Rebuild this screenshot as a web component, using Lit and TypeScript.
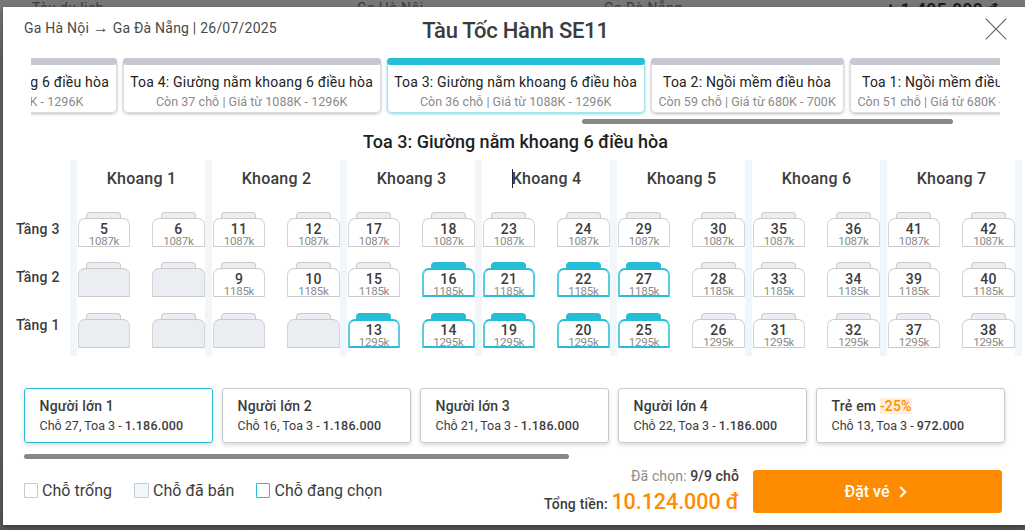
import {LitElement, html, css, nothing} from 'lit';
import {customElement, property} from 'lit/decorators.js';
import {classMap} from 'lit/directives/class-map.js';

type SeatState = 'free' | 'sold' | 'picked';

interface Seat {
  no: number;
  price: string;
  state: SeatState;
}

const COACHES = [
  {name: 'Toa 5: Giường nằm khoang 6 điều hòa', info: 'Còn 36 chỗ | Giá từ 1088K - 1296K', seat: false},
  {name: 'Toa 4: Giường nằm khoang 6 điều hòa', info: 'Còn 37 chỗ | Giá từ 1088K - 1296K', seat: false},
  {name: 'Toa 3: Giường nằm khoang 6 điều hòa', info: 'Còn 36 chỗ | Giá từ 1088K - 1296K', seat: false, active: true},
  {name: 'Toa 2: Ngồi mềm điều hòa', info: 'Còn 59 chỗ | Giá từ 680K - 700K', seat: true},
  {name: 'Toa 1: Ngồi mềm điều hòa', info: 'Còn 51 chỗ | Giá từ 680K - 700K', seat: true},
];

const PRICES = ['1087k', '1185k', '1295k'];
const SOLD = [1, 2, 3, 4, 7, 8];
const PICKED = [13, 14, 16, 19, 20, 21, 22, 25, 27];

const PASSENGERS = [
  {name: 'Người lớn 1', place: 'Chỗ 27, Toa 3 - ', price: '1.186.000', active: true},
  {name: 'Người lớn 2', place: 'Chỗ 16, Toa 3 - ', price: '1.186.000'},
  {name: 'Người lớn 3', place: 'Chỗ 21, Toa 3 - ', price: '1.186.000'},
  {name: 'Người lớn 4', place: 'Chỗ 22, Toa 3 - ', price: '1.186.000'},
  {name: 'Trẻ em', discount: '-25%', place: 'Chỗ 13, Toa 3 - ', price: '972.000'},
];

// six berths per compartment, numbered from the bottom level up
function berths(compartment: number): Seat[][] {
  return PRICES.map((price, row) => {
    const first = compartment * 6 + (2 - row) * 2 + 1;
    return [first, first + 1].map(no => ({
      no,
      price,
      state: SOLD.includes(no) ? 'sold' : PICKED.includes(no) ? 'picked' : 'free',
    } as Seat));
  });
}

@customElement('train-seat')
export class TrainSeat extends LitElement {

  static styles = css`
    :host {
      display: block;
      width: 52.4px;
      height: 35px;
    }

    .head {
      box-sizing: border-box;
      width: 35px;
      height: 6px;
      margin: 0 auto;
      border: 1px solid #c9cacc;
      border-bottom: 0;
      border-radius: 4px 4px 0 0;
      background: #eaedf2;
    }

    .body {
      box-sizing: border-box;
      height: 29px;
      padding-top: 3px;
      border: 1px solid #cbcbcb;
      border-left-color: #d4d4d4;
      border-right-color: #d4d4d4;
      border-radius: 7px 7px 1px 1px;
      background: #fff;
      text-align: center;
    }

    .sold {
      background: #eaedf2;
    }

    .picked.head {
      border-color: #26bed6;
      background: #26bed6;
    }

    .picked.body {
      border: 2px solid #26bed6;
      border-left-color: #58cde0;
      border-right-color: #58cde0;
      padding-top: 2px;
    }

    .no {
      font-size: 14px;
      font-weight: 500;
      line-height: 14px;
      letter-spacing: 0.2px;
      color: #3c3c3c;
    }

    .price {
      font-size: 11.5px;
      line-height: 11px;
      letter-spacing: -0.25px;
      color: #8b8b8b;
    }
  `

  @property({attribute: false}) seat!: Seat;

  render() {
    const {no, price, state} = this.seat;
    return html`
      <div class=${classMap({head: true, picked: state === 'picked'})}></div>
      <div class=${classMap({body: true, [state]: true})}>
        ${state === 'sold' ? nothing : html`
          <div class="no">${no}</div>
          <div class="price">${price}</div>
        `}
      </div>
    `
  }
}

@customElement('app-root')
export class AppRoot extends LitElement {

  static styles = css`
    :host {
      display: block;
      box-sizing: border-box;
      width: 1025px;
      height: 530px;
      overflow: hidden;
      font-family: Roboto, "Liberation Sans", sans-serif;
      color: #3c3c3c;
      background: linear-gradient(#777 0, #777 7px, #5f6264 60px, #5f6264 440px, #55565a 530px);
    }

    .behind {
      box-sizing: border-box;
      display: grid;
      grid-template-columns: 325px 247px 282px 1fr;
      height: 7px;
      padding-left: 32px;
      overflow: hidden;
      font-size: 14px;
      line-height: 16px;
      letter-spacing: 0.4px;
      color: #3b3b3b;
    }

    .behind b {
      font-size: 17px;
      line-height: 18px;
      letter-spacing: 0.5px;
      color: #1c1c1c;
    }

    .modal {
      height: 518px;
      margin-left: 3px;
      background: #fff;
      box-shadow: 0 2px 5px rgba(0, 0, 0, 0.35);
      overflow: hidden;
    }

    .header {
      box-sizing: border-box;
      display: grid;
      grid-template-columns: 1fr auto 1fr;
      height: 51px;
      padding: 9px 18px 0 21px;
    }

    .route {
      font-size: 14px;
      line-height: 25px;
      letter-spacing: 0.22px;
      color: #4a4a4a;
    }

    .arrow {
      font-size: 16px;
      line-height: 14px;
    }

    .train {
      font-size: 22px;
      font-weight: 500;
      line-height: 29px;
      letter-spacing: -0.25px;
    }

    .close {
      justify-self: end;
      margin-top: 2px;
    }

    .coaches {
      display: flex;
      gap: 6px;
      height: 61px;
      margin: 0 25px 0 28px;
      overflow: hidden;
    }

    .coach {
      box-sizing: border-box;
      flex: none;
      width: 258px;
      height: 55px;
      border: 1px solid #dcdce0;
      border-top: 0;
      border-radius: 5px;
      box-shadow: 0 1px 3px rgba(0, 0, 0, 0.28);
      text-align: center;
      white-space: nowrap;
    }

    .coach:first-child {
      margin-left: -172.4px;
    }

    .coach.seating {
      width: 193px;
    }

    .bar {
      height: 7px;
      margin: 0 -1px;
      border-radius: 4px;
      background: #c8c8d3;
    }

    .coach.active {
      border-color: #a5e3ec;
      box-shadow: 0 1px 3px rgba(38, 190, 214, 0.6);
    }

    .active .bar {
      background: #26bed6;
    }

    .coach-name {
      margin-top: 8px;
      font-size: 14px;
      line-height: 19px;
      letter-spacing: 0.2px;
      color: #222;
    }

    .coach-info {
      font-size: 12.5px;
      line-height: 19px;
      letter-spacing: 0.04px;
      color: #8a8a8a;
    }

    .thumb {
      height: 5px;
      border-radius: 3px;
      background: #888;
    }

    .coach-thumb {
      width: 371px;
      margin-left: 579px;
    }

    .coach-title {
      height: 36px;
      padding-left: 3px;
      font-size: 18px;
      font-weight: 500;
      line-height: 36px;
      text-align: center;
      color: #1f1f1f;
    }

    .map {
      display: flex;
      height: 196px;
    }

    .levels {
      box-sizing: border-box;
      width: 67px;
      padding: 45px 0 0 13px;
      font-size: 14px;
      font-weight: 500;
      line-height: 48px;
      letter-spacing: 0.2px;
    }

    .compartment {
      box-sizing: border-box;
      flex: none;
      width: 135px;
      border-left: 7px solid #f0f6f9;
    }

    .compartment-name {
      height: 52px;
      padding-left: 1px;
      font-size: 16px;
      font-weight: 500;
      line-height: 37px;
      letter-spacing: 0.2px;
      text-align: center;
    }

    .caret {
      display: inline-block;
      width: 1px;
      height: 19px;
      margin-right: -1px;
      vertical-align: -4px;
      background: #222;
    }

    .berths {
      display: grid;
      grid-template-rows: 50px 51px 35px;
    }

    .pair {
      display: flex;
      justify-content: space-between;
      padding: 0 0.4px 0 0.8px;
    }

    .edge {
      width: 7px;
      background: #f0f6f9;
    }

    .passengers {
      display: flex;
      gap: 9px;
      margin: 32px 0 0 21px;
    }

    .passenger {
      box-sizing: border-box;
      flex: none;
      width: 189px;
      height: 55px;
      padding: 8px 0 0 14.6px;
      border: 1px solid #c8c8d0;
      border-radius: 3px;
      box-shadow: 0 2px 4px rgba(0, 0, 0, 0.15);
    }

    .passenger.active {
      border-color: #26bed6;
    }

    .passenger-name {
      font-size: 14px;
      font-weight: 500;
      line-height: 18px;
      letter-spacing: 0.18px;
    }

    .discount {
      color: #ff8b00;
      background: #fff0dd;
    }

    .place {
      font-size: 12.5px;
      line-height: 21px;
    }

    .place b, .chosen b {
      font-weight: 500;
    }

    .place b {
      letter-spacing: 0.22px;
    }

    .passenger-thumb {
      width: 545px;
      margin: 11px 0 0 21px;
    }

    .footer {
      display: flex;
      height: 66px;
      padding: 0 23px 0 21px;
    }

    .legend {
      display: flex;
      align-items: center;
      gap: 22px;
      height: 63px;
      font-size: 16px;
      letter-spacing: 0.03px;
      white-space: nowrap;
    }

    .legend span {
      display: flex;
      align-items: center;
      gap: 4px;
    }

    .box {
      box-sizing: border-box;
      width: 14px;
      height: 15px;
      border: 1px solid #c8c8d0;
      border-radius: 1px;
    }

    .box.sold {
      width: 15px;
      background: #f0f6f9;
    }

    .box.picked {
      border-color: #26bed6;
    }

    .totals {
      flex: 1;
      padding: 7px 14px 0 0;
      text-align: right;
      white-space: nowrap;
    }

    .chosen {
      font-size: 14px;
      line-height: 20px;
      letter-spacing: 0.12px;
      color: #8b8b8b;
    }

    .chosen b {
      color: #3c3c3c;
    }

    .sum {
      font-size: 14px;
      font-weight: 500;
      line-height: 32px;
      letter-spacing: 0.18px;
    }

    .sum b {
      font-size: 21.5px;
      font-weight: 500;
      letter-spacing: -0.06px;
      color: #ff8b00;
    }

    .book {
      display: flex;
      align-items: center;
      justify-content: center;
      gap: 9px;
      width: 249px;
      height: 43px;
      margin-top: 11px;
      padding: 0 4px 0 0;
      box-sizing: border-box;
      border: 0;
      border-radius: 3px;
      background: #ff8b00;
      color: #fff;
      font: 500 16px Roboto, sans-serif;
    }
  `

  renderCompartment(index: number) {
    return html`
      <div class="compartment">
        <div class="compartment-name">${index === 3 ? html`<i class="caret"></i>` : nothing}Khoang ${index + 1}</div>
        <div class="berths">
          ${berths(index).map(row => html`
            <div class="pair">
              ${row.map(seat => html`<train-seat .seat=${seat}></train-seat>`)}
            </div>
          `)}
        </div>
      </div>
    `
  }

  render() {
    return html`
      <div class="behind">
        <span>Tàu du lịch</span><span>Ga Hà Nội</span><span>Ga Đà Nẵng</span><b>+ 1.495.000 đ</b>
      </div>
      <div class="modal">
        <div class="header">
          <div class="route">Ga Hà Nội <span class="arrow">→</span> Ga Đà Nẵng | 26/07/2025</div>
          <div class="train">Tàu Tốc Hành SE11</div>
          <svg class="close" width="22" height="22" viewBox="0 0 22 22" stroke="#666" stroke-width="1.2">
            <path d="M.7.7l20.6 20.6M21.3.7L.7 21.3"/>
          </svg>
        </div>

        <div class="coaches">
          ${COACHES.map(coach => html`
            <div class=${classMap({coach: true, seating: coach.seat, active: !!coach.active})}>
              <div class="bar"></div>
              <div class="coach-name">${coach.name}</div>
              <div class="coach-info">${coach.info}</div>
            </div>
          `)}
        </div>
        <div class="thumb coach-thumb"></div>
        <div class="coach-title">Toa 3: Giường nằm khoang 6 điều hòa</div>

        <div class="map">
          <div class="levels">
            ${[3, 2, 1].map(level => html`<div>Tầng ${level}</div>`)}
          </div>
          ${[0, 1, 2, 3, 4, 5, 6].map(i => this.renderCompartment(i))}
          <div class="edge"></div>
        </div>

        <div class="passengers">
          ${PASSENGERS.map(p => html`
            <div class=${classMap({passenger: true, active: !!p.active})}>
              <div class="passenger-name">${p.name} ${p.discount ? html`<span class="discount">${p.discount}</span>` : nothing}</div>
              <div class="place">${p.place}<b>${p.price}</b></div>
            </div>
          `)}
        </div>
        <div class="thumb passenger-thumb"></div>

        <div class="footer">
          <div class="legend">
            <span><i class="box"></i>Chỗ trống</span>
            <span><i class="box sold"></i>Chỗ đã bán</span>
            <span><i class="box picked"></i>Chỗ đang chọn</span>
          </div>
          <div class="totals">
            <div class="chosen">Đã chọn: <b>9/9 chỗ</b></div>
            <div class="sum">Tổng tiền: <b>10.124.000 đ</b></div>
          </div>
          <button class="book">
            Đặt vé
            <svg width="8" height="12" viewBox="0 0 8 12" fill="none" stroke="#fff" stroke-width="2">
              <path d="M1.2 1l5 5-5 5"/>
            </svg>
          </button>
        </div>
      </div>
    `
  }
}
